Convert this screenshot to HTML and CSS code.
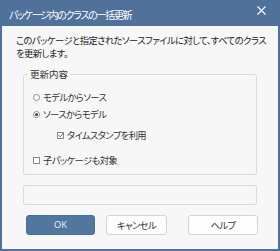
FILE: index.html
```html
<!DOCTYPE html>
<html lang="ja">
<head>
<meta charset="utf-8">
<link rel="stylesheet" href="styles.css">
</head>
<body>
<div class="window">
  <div class="titlebar">
    <span class="title">パッケージ内のクラスの一括更新</span>
    <svg class="close" width="9" height="9" viewBox="0 0 9 9"><path d="M0.5 0.5 L8.5 8.5 M8.5 0.5 L0.5 8.5" stroke="#ffffff" stroke-width="1.1" fill="none"/></svg>
  </div>
  <div class="content">
    <p class="desc">このパッケージと指定されたソースファイルに対して、すべてのクラス<br>を更新します。</p>
    <fieldset class="group">
      <legend class="legend">更新内容</legend>
      <div class="row row1"><span class="radio"></span><span>モデルからソース</span></div>
      <div class="row row2"><span class="radio on"></span><span>ソースからモデル</span></div>
      <div class="row row3 indent"><span class="check on"><svg width="6" height="6" viewBox="0 0 6 6"><path d="M0.6 3.1 L2.3 4.8 L5.4 1.0" stroke="#555" stroke-width="0.9" fill="none"/></svg></span><span>タイムスタンプを利用</span></div>
      <div class="row row4"><span class="check"></span><span>子パッケージも対象</span></div>
    </fieldset>
    <div class="status"></div>
    <div class="buttons">
      <button class="btn ok">OK</button>
      <button class="btn cancel">キャンセル</button>
      <button class="btn help">ヘルプ</button>
    </div>
  </div>
</div>
</body>
</html>
```
FILE: styles.css
```css
html, body {
  margin: 0;
  padding: 0;
  background: #f7f7f7;
}
body {
  font-family: "Noto Sans CJK JP", "Noto Sans", sans-serif;
  font-feature-settings: "palt";
}
.window {
  width: 280px;
  height: 251px;
  box-sizing: border-box;
  background: #50719a;
  padding: 0 2px 2px 2px;
  display: flex;
  flex-direction: column;
}
.titlebar {
  height: 26px;
  flex: none;
  display: flex;
  align-items: center;
  justify-content: space-between;
  padding: 0 12px 0 7px;
  color: #ffffff;
}
.title {
  font-size: 10px;
  line-height: 13px;
  letter-spacing: -1.3px;
  margin-top: 3px;
}
.close {
  margin-top: -6px;
}
.content {
  flex: 1;
  background: #f7f7f7;
  padding: 8px 0 0 14px;
  color: #222;
}
.desc {
  margin: 0;
  font-size: 9.3px;
  line-height: 12.5px;
  letter-spacing: -0.55px;
  white-space: nowrap;
}
.group {
  margin: 9px 0 0 7px;
  width: 234px;
  box-sizing: border-box;
  padding: 0 0 8px 9px;
  border: 1px solid #dadada;
  border-radius: 3px;
  min-width: 0;
}
.legend {
  font-size: 9.5px;
  line-height: 12px;
  padding: 0 2px;
  margin-left: -5px;
  color: #333;
}
.row {
  display: flex;
  align-items: center;
  font-size: 9.3px;
  line-height: 12px;
  letter-spacing: -0.6px;
  color: #333;
}
.row1 { margin-top: 11px; }
.row2 { margin-top: 5px; }
.row3 { margin-top: 9px; }
.row4 { margin-top: 13px; }
.indent { margin-left: 24px; }
.radio {
  width: 7px;
  height: 7px;
  border: 1px solid #8a8a8a;
  border-radius: 50%;
  box-sizing: border-box;
  margin-right: 3px;
  background: #fff;
  display: flex;
  align-items: center;
  justify-content: center;
}
.radio.on::after {
  content: "";
  width: 3px;
  height: 3px;
  border-radius: 50%;
  background: #444;
}
.check {
  width: 7px;
  height: 7px;
  border: 1px solid #8a8a8a;
  box-sizing: border-box;
  margin-right: 3px;
  background: #fff;
  display: flex;
  align-items: center;
  justify-content: center;
}
.check svg { flex: none; }
.status {
  margin: 10px 0 0 7px;
  width: 234px;
  height: 20px;
  box-sizing: border-box;
  border: 1px solid #dadada;
  border-radius: 3px;
}
.buttons {
  display: flex;
  margin: 10px 0 0 10px;
}
.btn {
  height: 20px;
  box-sizing: border-box;
  border: 1px solid #d4d4d4;
  border-radius: 3px;
  background: #fdfdfd;
  color: #333;
  font-family: "Noto Sans CJK JP", "Noto Sans", sans-serif;
  font-feature-settings: "palt";
  font-size: 9.3px;
  line-height: 12px;
  letter-spacing: -0.6px;
  padding: 0;
}
.ok {
  width: 69px;
  background: #52779f;
  border-color: #4a6d95;
  color: #f0f4f8;
  font-family: "Open Sans", "Noto Sans", sans-serif;
  letter-spacing: 0;
}
.cancel { width: 61px; margin-left: 11px; }
.help { width: 70px; margin-left: 21px; }
```
